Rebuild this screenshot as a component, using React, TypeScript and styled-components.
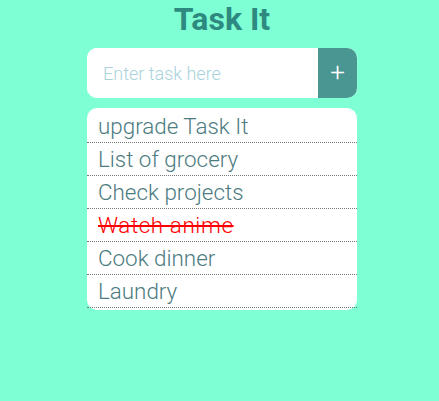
import React, { useState } from 'react';
import styled, { createGlobalStyle } from 'styled-components';

const GlobalStyle = createGlobalStyle`
  html, body {
    margin: 0;
    background: #7fffd4;
    font-family: Roboto, 'Liberation Sans', sans-serif;
  }
`;

type Task = {
  text: string;
  done: boolean;
};

const Page = styled.div`
  display: flex;
  flex-direction: column;
  align-items: center;
  padding-left: 5px;
`;

const Title = styled.h1`
  margin: 0;
  font-size: 32px;
  line-height: 38px;
  font-weight: 700;
  color: #2e8a80;
`;

const Form = styled.form`
  margin-top: 10px;
  width: 270px;
  height: 50px;
  display: flex;
  border-radius: 10px;
  overflow: hidden;
  background: #fff;
`;

const Input = styled.input`
  flex: 1;
  min-width: 0;
  border: none;
  outline: none;
  padding: 0 0 0 16px;
  font-family: Roboto, 'Liberation Sans', sans-serif;
  font-weight: 300;
  font-size: 18px;
  color: #4c7b80;

  &::placeholder {
    color: #a9d3dc;
  }
`;

const AddButton = styled.button`
  width: 39px;
  border: none;
  background: #4a9692;
  color: #fff;
  font-family: Roboto, 'Liberation Sans', sans-serif;
  font-size: 26px;
  font-weight: 300;
  padding: 0 0 3px;
  cursor: pointer;
`;

const List = styled.ul`
  margin: 10px 0 0;
  padding: 2px 0 2px;
  width: 270px;
  list-style: none;
  background: #fff;
  border-radius: 10px;
  box-sizing: border-box;
`;

const Item = styled.li<{ $done: boolean }>`
  height: 31px;
  padding-top: 1px;
  line-height: 31px;
  padding-left: 11px;
  border-bottom: 1px dotted #777;
  font-size: 22.4px;
  font-weight: 300;
  letter-spacing: ${(p) => (p.$done ? '0.6px' : '0')};
  color: ${(p) => (p.$done ? '#ff0000' : '#4c7b80')};
  text-decoration: ${(p) => (p.$done ? 'line-through' : 'none')};
  cursor: pointer;
`;

const initialTasks: Task[] = [
  { text: 'upgrade Task It', done: false },
  { text: 'List of grocery', done: false },
  { text: 'Check projects', done: false },
  { text: 'Watch anime', done: true },
  { text: 'Cook dinner', done: false },
  { text: 'Laundry', done: false },
];

const App: React.FC = () => {
  const [tasks, setTasks] = useState<Task[]>(initialTasks);
  const [value, setValue] = useState('');

  const addTask = (e: React.FormEvent) => {
    e.preventDefault();
    if (!value.trim()) return;
    setTasks([...tasks, { text: value.trim(), done: false }]);
    setValue('');
  };

  const toggle = (index: number) => {
    setTasks(tasks.map((t, i) => (i === index ? { ...t, done: !t.done } : t)));
  };

  return (
    <Page>
      <GlobalStyle />
      <Title>Task It</Title>
      <Form onSubmit={addTask}>
        <Input
          placeholder="Enter task here"
          value={value}
          onChange={(e) => setValue(e.target.value)}
        />
        <AddButton type="submit">+</AddButton>
      </Form>
      <List>
        {tasks.map((task, index) => (
          <Item key={index} $done={task.done} onClick={() => toggle(index)}>
            {task.text}
          </Item>
        ))}
      </List>
    </Page>
  );
};

export default App;
